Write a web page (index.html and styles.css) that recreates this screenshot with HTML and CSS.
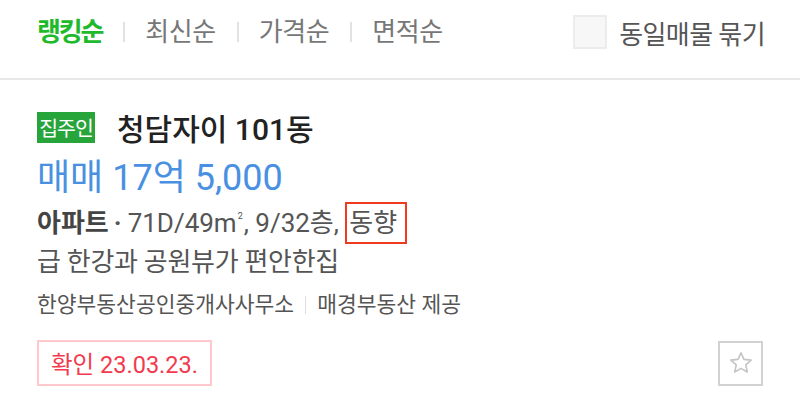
FILE: index.html
```html
<!DOCTYPE html>
<html lang="ko">
<head>
<meta charset="utf-8">
<link rel="stylesheet" href="styles.css">
</head>
<body>
<header class="sortbar">
  <nav class="tabs">
    <span class="tab active">랭킹순</span>
    <span class="sep"></span>
    <span class="tab">최신순</span>
    <span class="sep"></span>
    <span class="tab">가격순</span>
    <span class="sep"></span>
    <span class="tab">면적순</span>
  </nav>
  <label class="group">
    <span class="check"></span>
    <span class="group-label">동일매물 묶기</span>
  </label>
</header>
<article class="item">
  <div class="title-row">
    <span class="badge">집주인</span>
    <h2 class="title">청담자이 101동</h2>
  </div>
  <div class="price">매매 17억 5,000</div>
  <div class="spec"><b>아파트</b><span class="dot">·</span>71D/49m<sup>2</sup>, 9/32층, <span class="mark">동향</span></div>
  <div class="desc">급 한강과 공원뷰가 편안한집</div>
  <div class="agent">한양부동산공인중개사사무소<span class="vsep"></span>매경부동산 제공</div>
  <div class="bottom">
    <span class="confirm">확인 23.03.23.</span>
    <button class="fav" aria-label="관심">
      <svg width="26" height="26" viewBox="0 0 24 24"><path d="M12 2.6l2.75 6.05 6.6.7-4.95 4.45 1.4 6.5L12 16.95 6.2 20.3l1.4-6.5L2.65 9.35l6.6-.7z" fill="none" stroke="#c4c4c4" stroke-width="1.5" stroke-linejoin="round"/></svg>
    </button>
  </div>
</article>
</body>
</html>
```
FILE: styles.css
```css
* { box-sizing: border-box; }
html, body { margin: 0; padding: 0; background: #fff; }
body {
  width: 800px;
  height: 414px;
  overflow: hidden;
  font-family: "Roboto", "Noto Sans CJK KR", sans-serif;
  color: #555;
}
.sortbar {
  height: 80px;
  border-bottom: 2px solid #e8e8e8;
  display: flex;
  align-items: center;
  justify-content: space-between;
  padding: 0 35px 14px 37px;
}
.tabs { display: flex; align-items: center; }
.tab {
  font-size: 26px;
  letter-spacing: -0.4px;
  color: #777;
  line-height: 1;
}
.tab.active { color: #1fba2c; font-weight: 700; letter-spacing: -2.2px; }
.sep {
  width: 2px;
  height: 20px;
  background: #e2e2e2;
  margin: 0 20px 0 21px;
}
.group { display: flex; align-items: center; }
.check {
  width: 34px;
  height: 34px;
  border: 2px solid #ececec;
  background: #f7f7f7;
  margin-right: 12px;
}
.group-label {
  font-size: 26px;
  letter-spacing: -0.6px;
  color: #555;
}
.item {
  padding: 31px 37px 0 37px;
}
.title-row { display: flex; align-items: center; height: 32px; }
.badge {
  background: #27a53b;
  color: #fff;
  font-size: 20.5px;
  letter-spacing: -1px;
  width: 58px;
  height: 31px;
  display: flex;
  align-items: center;
  justify-content: center;
  margin-right: 22px;
}
.title {
  margin: 0;
  font-size: 30px;
  font-weight: 500;
  letter-spacing: 0;
  color: #222;
}
.price {
  margin-top: 15px;
  font-size: 36px;
  letter-spacing: 0;
  color: #4a90e2;
  font-weight: 400;
  line-height: 40px;
}
.spec {
  margin-top: 4px;
  font-size: 26px;
  letter-spacing: 0;
  color: #555;
  line-height: 42px;
  height: 42px;
}
.spec b { color: #444; font-weight: 700; }
.dot { margin: 0 6px 0 5px; font-weight: 700; }
.spec sup { font-size: 9px; vertical-align: top; position: relative; top: -7px; margin: 0 1px 0 1px; }
.mark {
  display: inline-block;
  border: 2px solid #f03a1f;
  padding: 0 8px 0 2px;
  line-height: 38px;
  vertical-align: top;
}
.desc {
  font-size: 26px;
  letter-spacing: -0.3px;
  line-height: 36px;
  color: #555;
}
.agent {
  margin-top: 10px;
  font-size: 21.5px;
  letter-spacing: 0;
  color: #555;
  display: flex;
  align-items: center;
  line-height: 30px;
}
.vsep {
  width: 1px;
  height: 18px;
  background: #ddd;
  margin: 0 11px;
}
.bottom {
  margin-top: 20px;
  display: flex;
  justify-content: space-between;
  align-items: center;
}
.confirm {
  border: 2px solid #ffc8cd;
  color: #f23a4e;
  font-size: 23.5px;
  letter-spacing: 0;
  height: 46px;
  padding: 0 12px;
  display: flex;
  align-items: center;
}
.fav {
  width: 45px;
  height: 45px;
  border: 2px solid #d2d2d2;
  background: #fff;
  padding: 0;
  display: flex;
  align-items: center;
  justify-content: center;
}
```
